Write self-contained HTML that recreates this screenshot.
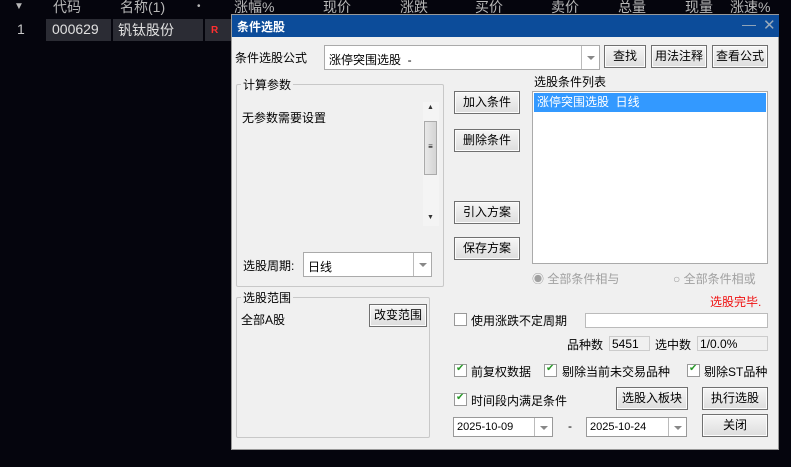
<!DOCTYPE html>
<html><head><meta charset="utf-8"><style>
*{margin:0;padding:0;box-sizing:border-box}
body{width:791px;height:467px;background:#05050d;position:relative;overflow:hidden;font-family:"Liberation Sans","Noto Sans CJK SC",sans-serif;font-size:12px;color:#000}
.a{position:absolute;white-space:nowrap}
.h{color:#b8b8b8;font-size:14px;top:-3px}
.btn{position:absolute;border:1px solid #707070;background:linear-gradient(#f6f6f6,#dddddd);text-align:center;font-size:12px;line-height:20px;box-shadow:inset 0 0 0 1px #fcfcfc}
.box{position:absolute;background:#fff;border:1px solid #aaa}
.grp{position:absolute;border:1px solid #c8c8c8;border-radius:2px}
.gl{position:absolute;background:#f0f0f0;padding:0 2px;top:-9px;left:4px;font-size:12px}
.dd{position:absolute;right:0;top:0;bottom:0;width:18px;border-left:1px solid #bbb}
.dd:after{content:"";position:absolute;left:5px;top:45%;border:4px solid transparent;border-top:4px solid #888}
.cb{position:absolute;width:13px;height:13px;border:1px solid #999;background:#fff}
.cb.k:after{content:"✔";position:absolute;left:1px;top:-2px;font-size:10px;color:#2a9a2a}
</style></head><body>
<div class="a h" style="left:14px;font-size:10px;top:1px">▼</div>
<div class="a h" style="left:53px">代码</div>
<div class="a h" style="left:120px">名称(1)</div>
<div class="a h" style="left:197px;font-size:10px;top:1px">•</div>
<div class="a h" style="left:234px">涨幅%</div>
<div class="a h" style="left:323px">现价</div>
<div class="a h" style="left:400px">涨跌</div>
<div class="a h" style="left:475px">买价</div>
<div class="a h" style="left:551px">卖价</div>
<div class="a h" style="left:618px">总量</div>
<div class="a h" style="left:685px">现量</div>
<div class="a h" style="left:730px">涨速%</div>
<div class="a" style="left:46px;top:19px;width:65px;height:22px;background:#2b2c34"></div>
<div class="a" style="left:113px;top:19px;width:90px;height:22px;background:#2b2c34"></div>
<div class="a" style="left:205px;top:19px;width:30px;height:22px;background:#2b2c34"></div>
<div class="a" style="left:17px;top:21px;color:#c8c8c8;font-size:14px">1</div>
<div class="a" style="left:52px;top:21px;color:#e0e0e0;font-size:14px">000629</div>
<div class="a" style="left:118px;top:20px;color:#e0e0e0;font-size:14px">钒钛股份</div>
<div class="a" style="left:211px;top:25px;color:#ff3030;font-size:10px;font-weight:bold">R</div>

<div class="a" style="left:231px;top:14px;width:548px;height:436px;background:#f0f0f0;border:1px solid #999">
 <div class="a" style="left:0;top:0;width:547px;height:22px;background:#0c4c9a"></div>
 <div class="a" style="left:5px;top:3px;color:#fff;font-weight:bold;font-size:12px">条件选股</div>
 <div class="a" style="left:510px;top:1px;color:#9ab;font-size:14px">—</div>
 <div class="a" style="left:531px;top:1px;color:#9ab;font-size:15px">✕</div>
</div>
<div class="a" style="left:235px;top:49px">条件选股公式</div>
<div class="box" style="left:324px;top:45px;width:276px;height:25px"><span class="a" style="left:4px;top:5px">涨停突围选股&nbsp;&nbsp;-</span><div class="dd"></div></div>
<div class="btn" style="left:604px;top:45px;width:42px;height:23px">查找</div>
<div class="btn" style="left:651px;top:45px;width:56px;height:23px">用法注释</div>
<div class="btn" style="left:712px;top:45px;width:56px;height:23px">查看公式</div>

<div class="grp" style="left:236px;top:84px;width:208px;height:203px"><span class="gl">计算参数</span></div>
<div class="a" style="left:242px;top:109px">无参数需要设置</div>
<div class="a" style="left:423px;top:102px;width:16px;height:124px;background:#f4f4f4">
 <div class="a" style="left:4px;top:2px;font-size:7px;color:#333">▲</div>
 <div class="a" style="left:1px;top:19px;width:13px;height:54px;border:1px solid #aaa;background:linear-gradient(90deg,#e8e8e8,#d4d4d4);font-size:8px;text-align:center;line-height:50px">≡</div>
 <div class="a" style="left:4px;top:112px;font-size:7px;color:#333">▼</div>
</div>
<div class="a" style="left:243px;top:257px">选股周期:</div>
<div class="box" style="left:303px;top:252px;width:129px;height:25px"><span class="a" style="left:4px;top:5px">日线</span><div class="dd"></div></div>

<div class="btn" style="left:454px;top:91px;width:66px;height:23px">加入条件</div>
<div class="btn" style="left:454px;top:129px;width:66px;height:23px">删除条件</div>
<div class="btn" style="left:454px;top:201px;width:66px;height:23px">引入方案</div>
<div class="btn" style="left:454px;top:237px;width:66px;height:23px">保存方案</div>

<div class="a" style="left:534px;top:73px">选股条件列表</div>
<div class="box" style="left:532px;top:91px;width:236px;height:173px"><div class="a" style="left:1px;top:1px;width:232px;height:19px;background:#3399ff;color:#fff;padding-left:3px;line-height:18px">涨停突围选股&nbsp;&nbsp;日线</div></div>
<div class="a" style="left:532px;top:270px;color:#a0a0a0">◉ 全部条件相与</div>
<div class="a" style="left:673px;top:270px;color:#a0a0a0">○ 全部条件相或</div>
<div class="a" style="left:710px;top:293px;color:#f01010">选股完毕.</div>

<div class="grp" style="left:236px;top:297px;width:194px;height:141px"><span class="gl">选股范围</span></div>
<div class="a" style="left:241px;top:311px">全部A股</div>
<div class="btn" style="left:369px;top:304px;width:58px;height:23px">改变范围</div>

<div class="cb" style="left:454px;top:313px"></div>
<div class="a" style="left:471px;top:312px">使用涨跌不定周期</div>
<div class="box" style="left:585px;top:313px;width:183px;height:15px;border-color:#bbb"></div>
<div class="a" style="left:567px;top:336px">品种数</div>
<div class="box" style="left:609px;top:336px;width:41px;height:15px;background:#f0f0f0;border-color:#ccc"><span class="a" style="left:2px;top:0px">5451</span></div>
<div class="a" style="left:655px;top:336px">选中数</div>
<div class="box" style="left:697px;top:336px;width:71px;height:15px;background:#f0f0f0;border-color:#ccc"><span class="a" style="left:2px;top:0px">1/0.0%</span></div>

<div class="cb k" style="left:454px;top:364px"></div><div class="a" style="left:471px;top:363px">前复权数据</div>
<div class="cb k" style="left:544px;top:364px"></div><div class="a" style="left:562px;top:363px">剔除当前未交易品种</div>
<div class="cb k" style="left:687px;top:364px"></div><div class="a" style="left:704px;top:363px">剔除ST品种</div>
<div class="cb k" style="left:454px;top:393px"></div><div class="a" style="left:471px;top:392px">时间段内满足条件</div>
<div class="btn" style="left:616px;top:387px;width:72px;height:23px">选股入板块</div>
<div class="btn" style="left:702px;top:387px;width:66px;height:23px">执行选股</div>
<div class="btn" style="left:702px;top:414px;width:66px;height:23px">关闭</div>
<div class="box" style="left:453px;top:417px;width:100px;height:20px;border-color:#999"><span class="a" style="left:3px;top:3px;font-size:11px">2025-10-09</span><div class="dd"></div></div>
<div class="a" style="left:568px;top:419px">-</div>
<div class="box" style="left:586px;top:417px;width:101px;height:20px;border-color:#999"><span class="a" style="left:3px;top:3px;font-size:11px">2025-10-24</span><div class="dd"></div></div>
</body></html>
